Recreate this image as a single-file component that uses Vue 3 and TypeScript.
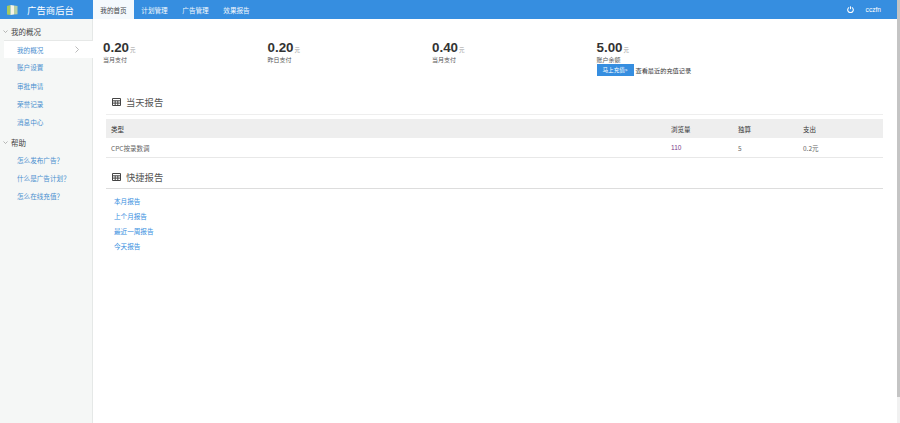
<script setup lang="ts">
const tabs = ['计划管理', '广告管理', '效果报告']
const stats = [
  { value: '0.20', label: '当月支付' },
  { value: '0.20', label: '昨日支付' },
  { value: '0.40', label: '当月支付' },
]
const menu = ['账户设置', '审批申请', '荣誉记录', '消息中心']
const help = ['怎么发布广告？', '什么是广告计划？', '怎么在线充值？']
const quick = ['本月报告', '上个月报告', '最近一周报告', '今天报告']
</script>

<template>
  <div class="shell">
    <div class="page">
      <header class="top">
        <div class="brand">
          <svg class="logo" width="11" height="10" viewBox="0 0 11 10">
            <path d="M0 1 L3.5 0 V10 L0 9.4 Z" fill="#a6c95f" />
            <path d="M3.5 0 L7 .5 V9.6 L3.5 10 Z" fill="#f6f4e6" />
            <path d="M7 .5 L10.5 1 V9.2 L7 9.6 Z" fill="#b9cfa6" />
          </svg>
          <span>广告商后台</span>
        </div>
        <nav class="tabs">
          <a class="tab active">我的首页</a>
          <a v-for="t in tabs" :key="t" class="tab">{{ t }}</a>
        </nav>
        <div class="user">
          <svg width="7" height="7" viewBox="0 0 10 10" fill="none" stroke="#fff" stroke-width="1.5">
            <path d="M3 2 A4 4 0 1 0 7 2" />
            <path d="M5 0.5 V4.5" />
          </svg>
          <span>cczfn</span>
        </div>
      </header>
      <div class="body">
        <aside class="side">
          <div class="group">
            <svg class="caret" width="5" height="3" viewBox="0 0 5 3" fill="none" stroke="#999" stroke-width=".7"><path d="M.5.5 2.5 2.5 4.5.5" /></svg>
            我的概况
          </div>
          <a class="item current">我的概况
            <svg class="chev" width="4" height="7" viewBox="0 0 4 7" fill="none" stroke="#aaa" stroke-width=".8"><path d="M.5.5 3.5 3.5.5 6.5" /></svg>
          </a>
          <a v-for="m in menu" :key="m" class="item">{{ m }}</a>
          <div class="group second">
            <svg class="caret" width="5" height="3" viewBox="0 0 5 3" fill="none" stroke="#999" stroke-width=".7"><path d="M.5.5 2.5 2.5 4.5.5" /></svg>
            帮助
          </div>
          <a v-for="h in help" :key="h" class="item">{{ h }}</a>
        </aside>
        <main class="main">
          <section class="stats">
            <div v-for="(s, i) in stats" :key="i" class="stat">
              <div class="num">{{ s.value }}<small>元</small></div>
              <div class="lbl">{{ s.label }}</div>
            </div>
            <div class="stat">
              <div class="num">5.00<small>元</small></div>
              <div class="lbl">账户余额</div>
              <div class="act"><a class="btn">马上充值»</a><a class="rec">查看最近的充值记录</a></div>
            </div>
          </section>
          <div class="head first">
            <svg class="ico" width="9" height="8" viewBox="0 0 9 8" fill="none" stroke="#444" stroke-width="1">
              <path d="M.5.5h8v7h-8zM.5 2.8h8M.5 5.1h8M3.2 2.8v4.7M5.8 2.8v4.7" />
            </svg>
            <h3>当天报告</h3>
          </div>
          <table class="tbl">
            <thead>
              <tr><th>类型</th><th>浏览量</th><th>独算</th><th>支出</th></tr>
            </thead>
            <tbody>
              <tr><td>CPC按录数调</td><td class="pv">110</td><td>5</td><td>0.2元</td></tr>
            </tbody>
          </table>
          <div class="head second">
            <svg class="ico" width="9" height="8" viewBox="0 0 9 8" fill="none" stroke="#444" stroke-width="1">
              <path d="M.5.5h8v7h-8zM.5 2.8h8M.5 5.1h8M3.2 2.8v4.7M5.8 2.8v4.7" />
            </svg>
            <h3>快捷报告</h3>
          </div>
          <ul class="quick">
            <li v-for="q in quick" :key="q"><a>{{ q }}</a></li>
          </ul>
        </main>
      </div>
    </div>
    <div class="scroll"><div class="thumb"></div></div>
  </div>
</template>

<style>
html, body { margin: 0; height: 100%; overflow: hidden; }
</style>

<style scoped>
.shell {
  width: 900px;
  height: 423px;
  display: flex;
  background: #fff;
}
.scroll { width: 3px; background: #f1f1f1; flex: none; }
.thumb { height: 397px; background: #c4c4c4; }
.page {
  width: 897px;
  height: 423px;
  display: flex;
  flex-direction: column;
  font-family: "Noto Sans CJK SC", "Liberation Sans", sans-serif;
  font-size: 6.6px;
  color: #333;
  background: #fff;
}
.top {
  height: 19px;
  background: #368ee0;
  display: flex;
  align-items: stretch;
  color: #fff;
  flex: none;
}
.brand {
  width: 93px;
  display: flex;
  align-items: center;
  font-size: 9.4px;
  padding-left: 7px;
  box-sizing: border-box;
  gap: 9px;
  white-space: nowrap;
}
.logo { flex: none; }
.tabs { display: flex; }
.tab {
  width: 41px;
  display: flex;
  align-items: center;
  justify-content: center;
  white-space: nowrap;
  height: 19px;
  opacity: .95;
}
.tab.active { background: #fff; color: #444; height: 20px; }
.user {
  margin-left: auto;
  display: flex;
  align-items: center;
  gap: 12px;
  padding-right: 16px;
  font-family: "Liberation Sans", sans-serif;
}
.body { flex: 1; display: flex; min-height: 0; }
.side {
  width: 93px;
  flex: none;
  box-sizing: border-box;
  background: #f5f7f6;
  border-right: 1px solid #e5e8e7;
  padding-top: 4px;
}
.group {
  height: 17px;
  display: flex;
  align-items: center;
  padding-left: 11px;
  font-size: 7.5px;
  color: #444;
  position: relative;
}
.group.second { margin-top: 3px; height: 16px; }
.caret {
  position: absolute;
  left: 3px;
  top: 7px;
}
.item {
  height: 18.3px;
  display: flex;
  align-items: center;
  padding-left: 17px;
  color: #4a8fcf;
  white-space: nowrap;
  position: relative;
}
.item.current {
  background: #fff;
  box-sizing: border-box;
  border-top: 1px solid #e6e8e7;
  margin-left: 4px;
  padding-left: 13px;
  margin-right: -1px;
}
.chev {
  position: absolute;
  right: 14px;
  top: 5px;
}
.main { flex: 1; padding: 22px 14px 0 13px; min-width: 0; }
.stats { display: flex; height: 49px; margin-left: -3px; }
.stat { width: 164.5px; }
.num {
  font-size: 13.4px;
  font-weight: 700;
  line-height: 13px;
  font-family: "Liberation Sans", sans-serif;
  color: #333;
}
.num small {
  font-size: 5.5px;
  font-weight: 400;
  line-height: 0;
  color: #999;
  margin-left: 1px;
  font-family: "Noto Sans CJK SC", sans-serif;
}
.lbl { font-size: 6px; line-height: 7px; color: #555; margin-top: 2px; }
.act { display: flex; align-items: center; margin-top: 1px; }
.btn {
  width: 37px;
  height: 12px;
  background: #368ee0;
  color: #fff;
  display: flex;
  align-items: center;
  justify-content: center;
  font-size: 5.6px;
  white-space: nowrap;
}
.rec { margin-left: 2px; font-size: 6.2px; color: #333; white-space: nowrap; }
.head {
  display: flex;
  align-items: center;
  gap: 5px;
  padding-left: 6px;
  height: 25px;
  border-bottom: 1px solid #eee;
  box-sizing: border-box;
}
.head.second { margin-top: 9px; height: 22px; padding-bottom: 2px; border-bottom-color: #ddd; }
h3 { margin: 0; font-size: 9.3px; font-weight: 400; color: #555; }
.tbl { width: 777px; border-collapse: collapse; table-layout: fixed; margin-top: 4px; }
.tbl th {
  height: 19px;
  padding: 0 0 0 5px;
  text-align: left;
  background: #eee;
  font-weight: 400;
  font-size: 6.5px;
  color: #333;
}
.tbl th:nth-child(1) { width: 555px; }
.tbl th:nth-child(2) { width: 62px; }
.tbl th:nth-child(3) { width: 60px; }
.tbl td {
  height: 19px;
  padding: 0 0 0 5px;
  color: #666;
  font-size: 6.5px;
  border-bottom: 1px solid #e8e8e8;
}
.tbl .pv { color: #7b3a8a; font-family: "Liberation Sans", sans-serif; }
.quick { list-style: none; margin: 4px 0 0; padding: 0 0 0 8px; }
.quick li { height: 15px; display: flex; align-items: center; }
.quick a { color: #368ee0; }
</style>
